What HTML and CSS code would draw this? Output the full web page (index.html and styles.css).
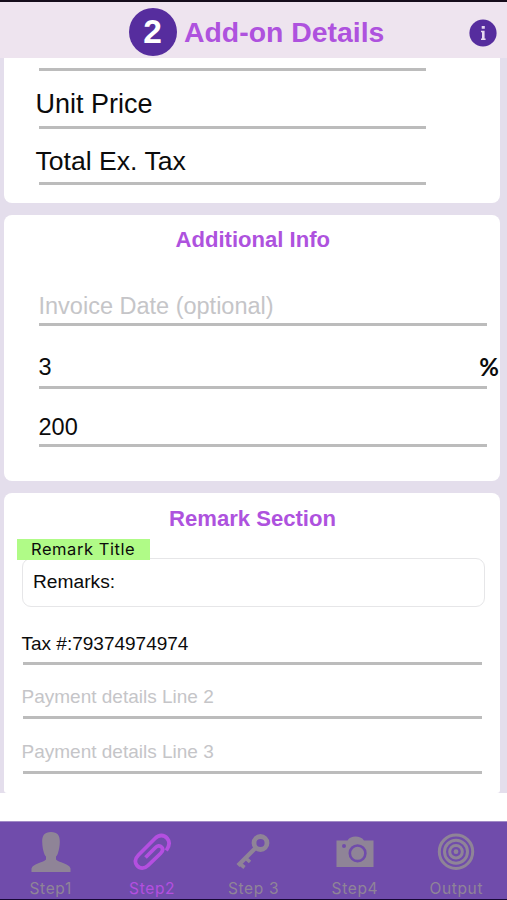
FILE: index.html
```html
<!DOCTYPE html>
<html lang="en">
<head>
<meta charset="utf-8">
<title>Add-on Details</title>
<link rel="stylesheet" href="styles.css">
</head>
<body>
<div class="app">
  <header class="header">
    <span class="step-number">2</span>
    <h1>Add-on Details</h1>
    <svg class="info" viewBox="0 0 28 28"><circle cx="14" cy="14" r="13.6" fill="#562d9e"/><path d="M12.700 7h3.100v2.800h-3.100zM12 11.800h3.600v7.700h1v1.400h-4.600v-1.400h1v-6.300h-1z" fill="#e6d9f0"/></svg>
  </header>
  <main class="content">
    <section class="card totals">
      <div class="field empty"></div>
      <div class="field unit"><span>Unit Price</span></div>
      <div class="field total"><span>Total Ex. Tax</span></div>
    </section>
    <section class="card additional">
      <h2>Additional Info</h2>
      <div class="field date placeholder"><span>Invoice Date (optional)</span></div>
      <div class="field percent"><span>3</span><b>%</b></div>
      <div class="field amount"><span>200</span></div>
    </section>
    <section class="card remark">
      <h2>Remark Section</h2>
      <div class="chip">Remark Title</div>
      <div class="textbox">Remarks:</div>
      <div class="field tax"><span>Tax #:79374974974</span></div>
      <div class="field line2 placeholder"><span>Payment details Line 2</span></div>
      <div class="field line3 placeholder"><span>Payment details Line 3</span></div>
    </section>
  </main>
  <nav class="tabs">
    <div class="tab">
      <svg viewBox="0 0 40 40"><path fill="currentColor" d="M20 0C13.500 0 11 3.500 11.200 10c.1 4 .8 8 1.800 11 .6 1.800 1.300 2.800 2 3.500v3c-2 3-13.500 4-14.500 9V40h39v-3.500c-1-5-12.500-6-14.500-9v-3c.7-.7 1.400-1.700 2-3.500 1-3 1.700-7 1.800-11C29 3.500 26.500 0 20 0z"/></svg>
      <span>Step1</span>
    </div>
    <div class="tab active">
      <svg viewBox="0 0 40 40"><path fill="none" stroke="currentColor" stroke-width="3.800" d="M34.300 18.500C37.500 14 37.800 9.500 35.300 6.500 32 2.500 27 2.500 23 6.500L6.500 23c-3.500 3.500-4 7.500-1.500 10.500 3 3.500 7.500 3.500 11 0L28.500 21.500c2.500-2.500 2.500-5 1-6.500-1.700-1.800-4.200-1.300-6 .5L13.500 25.500"/></svg>
      <span>Step2</span>
    </div>
    <div class="tab">
      <svg viewBox="0 0 40 40"><g fill="none" stroke="currentColor"><circle cx="27.500" cy="11" r="6.500" stroke-width="4.800"/><path stroke-width="4.300" d="M23 15.500L5 33.500"/><path stroke-width="3.600" d="M6 31l5.500 4.500M12 25.500l5 4.500"/></g></svg>
      <span>Step 3</span>
    </div>
    <div class="tab">
      <svg viewBox="0 0 40 40"><path fill="currentColor" fill-rule="evenodd" d="M1.500 8.500H12.500C14.500 5.500 17 4.500 20.500 4.500S27 5.500 29 8.500h9.500V35h-37zM22.600 12.200a9.100 9.100 0 100 18.200 9.100 9.100 0 000-18.200zM22.600 14.800a6.500 6.500 0 110 13 6.500 6.500 0 010-13zM9 12a2 2 0 100 4 2 2 0 000-4z"/></svg>
      <span>Step4</span>
    </div>
    <div class="tab">
      <svg viewBox="0 0 40 40"><g fill="none" stroke="currentColor" stroke-width="3"><circle cx="20" cy="19.700" r="16.700"/><circle cx="20" cy="19.700" r="11.500"/><circle cx="20" cy="19.700" r="6.300"/></g><circle cx="20" cy="19.700" r="2.400" fill="currentColor"/></svg>
      <span>Output</span>
    </div>
  </nav>
</div>
</body>
</html>
```
FILE: styles.css
```css
* { box-sizing: border-box; }
body {
  margin: 0;
  background: #fff;
  color: #0b0b0b;
  font-family: "Liberation Sans", Arial, sans-serif;
}
.app {
  width: 507px;
  height: 900px;
  display: flex;
  flex-direction: column;
  overflow: hidden;
}
.header {
  height: 58px;
  flex: none;
  display: flex;
  align-items: center;
  padding: 5px 10.500px 0 128.500px;
  border-top: 2px solid #150d1b;
  background: #eee4ef;
}
.step-number {
  width: 48px;
  height: 48px;
  border-radius: 50%;
  background: #562d9e;
  color: #fff;
  font-weight: bold;
  font-size: 33.500px;
  line-height: 48px;
  text-align: center;
  margin-top: -2px;
}
h1 {
  margin: -2px 0 0 7.500px;
  color: #ae52de;
  font-size: 28.400px;
  line-height: 32px;
}
.info {
  width: 28px;
  height: 28px;
  margin-left: auto;
}
.content {
  height: 735px;
  flex: none;
  padding: 0 7px 0 4px;
  background: #e4deec;
  display: flex;
  flex-direction: column;
  gap: 12.500px;
}
.card {
  background: #fff;
  border-radius: 8px;
  flex: none;
}
.totals {
  height: 144.500px;
  border-radius: 0 0 8px 8px;
  padding: 0 74px 0 34.500px;
}
.additional {
  height: 265.500px;
  padding: 13px 13px 0 34.500px;
}
.remark {
  height: 300px;
  border-radius: 8px 8px 3px 3px;
  padding: 14px 18.500px 0 17.500px;
}
h2 {
  margin: 0;
  color: #ae52de;
  font-size: 22.100px;
  line-height: 24px;
  text-align: center;
}
.additional h2 { margin: 0 0 0 -20px; }
.remark h2 { margin-right: -2px; }
.field {
  display: flex;
  align-items: flex-end;
  justify-content: space-between;
  border-bottom: 3px solid #bcbcbc;
  white-space: nowrap;
  line-height: 24px;
  font-size: 23.500px;
}
.placeholder { color: #c5c5c8; }
.empty { height: 13px; }
.unit { height: 58px; padding-bottom: 10px; font-size: 27px; }
.total { height: 56px; padding-bottom: 9px; font-size: 26.600px; }
.unit span, .total span { margin-left: -3px; }
.date { height: 74px; padding-bottom: 5px; }
.percent { height: 63px; padding-bottom: 7px; }
.percent b {
  margin-right: -12px;
  font: 700 24px/24px Lato, sans-serif;
}
.amount { height: 58px; padding-bottom: 5px; }
.chip {
  position: relative;
  width: 133px;
  height: 20.500px;
  margin: 8px 0 -1.500px -4.500px;
  padding-left: 14px;
  background: #b0fb87;
  font: 16.500px/21px Inter, sans-serif;
  letter-spacing: .55px;
  white-space: nowrap;
}
.textbox {
  height: 49px;
  margin-right: -3px;
  padding: 13px 10.500px;
  border: 1px solid #e6e6e8;
  border-radius: 9px;
  font-size: 19.200px;
  line-height: 20px;
}
.tax, .line2, .line3 {
  margin-left: 1px;
  font-size: 19px;
  line-height: 20px;
}
.tax span, .line2 span, .line3 span { margin-left: -1px; }
.tax { height: 58px; padding-bottom: 8.500px; }
.line2 { height: 54px; padding-bottom: 9px; }
.line3 { height: 55px; padding-bottom: 9px; }
.tabs {
  height: 79px;
  flex: none;
  margin-top: auto;
  display: grid;
  grid-template-columns: repeat(5, 1fr);
  background: #704cab;
  border-top: 1px solid #a18bc6;
  border-bottom: 1px solid #180735;
}
.tab {
  display: flex;
  flex-direction: column;
  align-items: center;
  padding-top: 10px;
  color: #8f8497;
}
.tab svg { width: 40px; height: 40px; }
.tab span {
  margin-top: 7px;
  font: 15.500px/20px Inter, sans-serif;
  letter-spacing: .65px;
}
.tab.active { color: #b44fe0; }
```
